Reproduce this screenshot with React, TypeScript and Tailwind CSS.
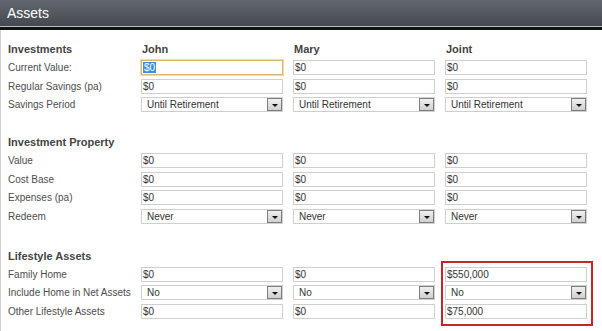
import React from 'react';

const font = { fontFamily: '"Liberation Sans", Arial, sans-serif' };

type Field = { label: string; kind: 'text' | 'select'; values: string[] };

function TextBox({ value, focused }: { value: string; focused?: boolean }) {
  return (
    <div
      className={
        'h-[15px] w-[142px] bg-white flex items-center pl-[1px] text-[10px] text-[#333] ' +
        (focused ? 'border border-[#dcb566] shadow-[0_0_0_1px_#f1dca6]' : 'border border-[#cfcfcf]')
      }
    >
      {focused ? <span className="bg-[#3a8ee6] text-white leading-[11px] px-[1px]">{value}</span> : value}
    </div>
  );
}

function SelectBox({ value }: { value: string }) {
  return (
    <div className="h-[15px] w-[142px] bg-white border border-[#cfcfcf] flex items-center pl-[5px] text-[10px] text-[#333]">
      <span className="flex-1">{value}</span>
      <div className="h-[13px] w-[15px] border border-[#7d7d7d] bg-gradient-to-b from-[#f0f0f0] to-[#cfcfcf] flex items-end justify-center pb-[3px]">
        <svg width="6" height="3" viewBox="0 0 6 3">
          <polygon points="0,0 6,0 3,3" fill="#111" />
        </svg>
      </div>
    </div>
  );
}

function Section({
  title,
  names,
  fields,
  focusFirst,
  highlight,
}: {
  title: string;
  names?: string[];
  fields: Field[];
  focusFirst?: boolean;
  highlight?: boolean;
}) {
  return (
    <div className="relative">
      <div className="grid grid-cols-[123px_142px_142px_142px] gap-x-[10px] h-[14px] items-center text-[11px] font-bold text-[#444]">
        <div>{title}</div>
        {(names ?? ['', '', '']).map((n, i) => (
          <div key={i} className="pl-[1px]">{n}</div>
        ))}
      </div>
      <div className="mt-[5px] flex flex-col gap-[3.5px]">
        {fields.map((f, r) => (
          <div key={f.label} className="grid grid-cols-[123px_142px_142px_142px] gap-x-[10px] h-[15px] items-center">
            <div className="text-[10px] text-[#4d4d4d] whitespace-nowrap">{f.label}</div>
            {f.values.map((v, i) =>
              f.kind === 'text' ? (
                <TextBox key={i} value={v} focused={focusFirst && r === 0 && i === 0} />
              ) : (
                <SelectBox key={i} value={v} />
              )
            )}
          </div>
        ))}
      </div>
      {highlight && (
        <div className="absolute left-[433px] top-[13px] w-[152px] h-[65px] border-2 border-[#c3262c] pointer-events-none" />
      )}
    </div>
  );
}

export default function App() {
  return (
    <div className="w-[602px] h-[331px] bg-white overflow-hidden" style={font}>
      <div className="h-[26px] bg-gradient-to-b from-[#63686f] to-[#45494f] flex items-center pl-[7px] text-[14px] text-white">
        Assets
      </div>
      <div className="h-[1px] bg-[#b9bdc2]" />
      <div className="h-[3px] bg-[#111]" />
      <div className="h-[301px] border-l border-[#d0d0d0] pl-[7px] pt-[11px]">
        <Section
          title="Investments"
          names={['John', 'Mary', 'Joint']}
          focusFirst
          fields={[
            { label: 'Current Value:', kind: 'text', values: ['$0', '$0', '$0'] },
            { label: 'Regular Savings (pa)', kind: 'text', values: ['$0', '$0', '$0'] },
            { label: 'Savings Period', kind: 'select', values: ['Until Retirement', 'Until Retirement', 'Until Retirement'] },
          ]}
        />
        <div className="mt-[22px]">
          <Section
            title="Investment Property"
            fields={[
              { label: 'Value', kind: 'text', values: ['$0', '$0', '$0'] },
              { label: 'Cost Base', kind: 'text', values: ['$0', '$0', '$0'] },
              { label: 'Expenses (pa)', kind: 'text', values: ['$0', '$0', '$0'] },
              { label: 'Redeem', kind: 'select', values: ['Never', 'Never', 'Never'] },
            ]}
          />
        </div>
        <div className="mt-[24px]">
          <Section
            title="Lifestyle Assets"
            highlight
            fields={[
              { label: 'Family Home', kind: 'text', values: ['$0', '$0', '$550,000'] },
              { label: 'Include Home in Net Assets', kind: 'select', values: ['No', 'No', 'No'] },
              { label: 'Other Lifestyle Assets', kind: 'text', values: ['$0', '$0', '$75,000'] },
            ]}
          />
        </div>
      </div>
    </div>
  );
}
